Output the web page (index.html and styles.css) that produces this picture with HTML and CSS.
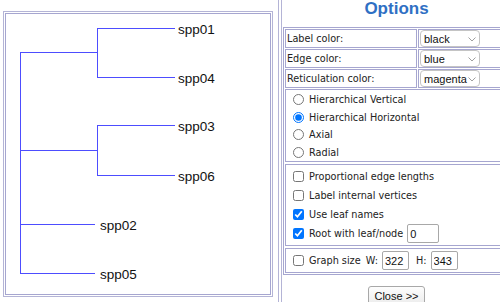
FILE: index.html
```html
<!DOCTYPE html>
<html lang="en">
<head>
    <meta charset="UTF-8">
    <meta name="viewport" content="width=device-width, initial-scale=1.0">
    <title>Tree viewer</title>
    <link rel="stylesheet" href="styles.css">
</head>
<body>
    <div class="page">
        <div class="tree-cell">
            <div class="tree-frame">
                <div class="tree-box">
                    <svg class="tree" width="264" height="280" viewBox="6 14 264 280">
                        <g class="edges">
                            <line x1="20.5" y1="52" x2="20.5" y2="274"/>
                            <line x1="20" y1="52.5" x2="97" y2="52.5"/>
                            <line x1="97.5" y1="28" x2="97.5" y2="78"/>
                            <line x1="97" y1="28.5" x2="175" y2="28.5"/>
                            <line x1="97" y1="77.5" x2="175" y2="77.5"/>
                            <line x1="20" y1="150.5" x2="97" y2="150.5"/>
                            <line x1="97.5" y1="125" x2="97.5" y2="176"/>
                            <line x1="97" y1="125.5" x2="175" y2="125.5"/>
                            <line x1="97" y1="175.5" x2="175" y2="175.5"/>
                            <line x1="20" y1="224.5" x2="95" y2="224.5"/>
                            <line x1="20" y1="273.5" x2="95" y2="273.5"/>
                        </g>
                        <g class="leaves">
                            <text x="178" y="34">spp01</text>
                            <text x="178" y="83">spp04</text>
                            <text x="178" y="131">spp03</text>
                            <text x="178" y="181">spp06</text>
                            <text x="100" y="230">spp02</text>
                            <text x="100" y="279">spp05</text>
                        </g>
                    </svg>
                </div>
            </div>
        </div>

        <div class="options-cell">
            <div class="options-inner">
                <h1 class="options-title">Options</h1>
                <div class="options-table">
                    <div class="opt-pair">
                        <div class="opt-label">Label color:</div>
                        <div class="opt-value">
                            <div class="select-wrap">
                                <select><option>black</option><option>blue</option><option>red</option></select>
                                <svg class="chevron" width="8" height="5" viewBox="0 0 8 5"><path d="M0.5 0.5 L4 4 L7.5 0.5"/></svg>
                            </div>
                        </div>
                    </div>
                    <div class="opt-pair">
                        <div class="opt-label">Edge color:</div>
                        <div class="opt-value">
                            <div class="select-wrap">
                                <select><option>blue</option><option>black</option><option>red</option></select>
                                <svg class="chevron" width="8" height="5" viewBox="0 0 8 5"><path d="M0.5 0.5 L4 4 L7.5 0.5"/></svg>
                            </div>
                        </div>
                    </div>
                    <div class="opt-pair">
                        <div class="opt-label">Reticulation color:</div>
                        <div class="opt-value">
                            <div class="select-wrap">
                                <select><option>magenta</option><option>black</option><option>blue</option></select>
                                <svg class="chevron" width="8" height="5" viewBox="0 0 8 5"><path d="M0.5 0.5 L4 4 L7.5 0.5"/></svg>
                            </div>
                        </div>
                    </div>

                    <div class="opt-group radios">
                        <label class="opt-row"><input type="radio" name="layout"> Hierarchical Vertical</label>
                        <label class="opt-row"><input type="radio" name="layout" checked> Hierarchical Horizontal</label>
                        <label class="opt-row"><input type="radio" name="layout"> Axial</label>
                        <label class="opt-row"><input type="radio" name="layout"> Radial</label>
                    </div>

                    <div class="opt-group checks">
                        <label class="opt-row"><input type="checkbox"> Proportional edge lengths</label>
                        <label class="opt-row"><input type="checkbox"> Label internal vertices</label>
                        <label class="opt-row"><input type="checkbox" checked> Use leaf names</label>
                        <div class="opt-row"><input type="checkbox" checked> Root with leaf/node<input class="num-input root-input" type="text" value="0"></div>
                    </div>

                    <div class="opt-group size">
                        <div class="opt-row"><input type="checkbox"> Graph size<span class="dim-label">W:</span><input class="num-input" type="text" value="322"><span class="dim-label dim-h">H:</span><input class="num-input" type="text" value="343"></div>
                    </div>
                </div>
                <div class="close-row">
                    <button class="close-btn">Close &gt;&gt;</button>
                </div>
            </div>
        </div>
    </div>
</body>
</html>
```

FILE: styles.css
```css
body {
    margin: 0;
    background: #fff;
    font-family: 'DejaVu Sans', Verdana, sans-serif;
}
.page {
    display: flex;
    width: 500px;
    height: 302px;
    overflow: hidden;
}
.tree-cell {
    flex: 0 0 275px;
    padding: 11px 0 0 3px;
}
.tree-frame {
    box-sizing: border-box;
    width: 270px;
    height: 286px;
    border: 1px solid #b4b4d6;
    padding: 1px;
}
.tree-box {
    box-sizing: border-box;
    height: 100%;
    border: 1px solid #a6a6d0;
}
.tree {
    display: block;
}
.edges line {
    stroke: #4d4dff;
    stroke-width: 1;
}
.leaves text {
    font-family: 'Liberation Sans', Arial, sans-serif;
    font-size: 13.5px;
    fill: #111;
}
.options-cell {
    flex: 0 0 auto;
    border-left: 1px solid #b4b4d6;
    padding-left: 2px;
}
.options-inner {
    width: 229px;
    height: 100%;
    border-left: 1px solid #b4b4d6;
}
.options-title {
    margin: 0 0 10px;
    font-family: 'Liberation Sans', Arial, sans-serif;
    font-size: 17px;
    line-height: 17px;
    font-weight: bold;
    color: #2f70c4;
    text-align: center;
}
.options-table {
    box-sizing: border-box;
    width: 228px;
    margin-left: 1px;
    border: 1px solid #a6a6d0;
    padding: 1px;
    display: flex;
    flex-direction: column;
    gap: 1px;
    font-size: 9.7px;
    color: #222;
}
.opt-pair {
    display: flex;
    gap: 1px;
    height: 19px;
}
.opt-label,
.opt-value {
    box-sizing: border-box;
    border: 1px solid #a6a6d0;
    padding: 0 1px;
    display: flex;
    align-items: center;
}
.opt-label {
    width: 132px;
}
.opt-value {
    flex: 1;
}
.select-wrap {
    position: relative;
    width: 60px;
    height: 17px;
}
.select-wrap select {
    appearance: none;
    box-sizing: border-box;
    width: 100%;
    height: 100%;
    margin: 0;
    padding: 0 0 0 3px;
    border: 1px solid #c4c4c4;
    border-radius: 4px;
    background: #fff;
    font-family: 'Liberation Sans', Arial, sans-serif;
    font-size: 11px;
    color: #111;
}
.chevron {
    position: absolute;
    right: 4px;
    top: 7px;
    pointer-events: none;
}
.chevron path {
    fill: none;
    stroke: #a0a0a0;
    stroke-width: 1;
}
.opt-group {
    box-sizing: border-box;
    border: 1px solid #a6a6d0;
    display: flex;
    flex-direction: column;
}
.radios {
    height: 73px;
    padding-top: 1px;
}
.radios .opt-row {
    height: 17.5px;
}
.checks {
    margin-top: 1px;
    height: 82px;
    padding-top: 2px;
}
.checks .opt-row {
    height: 19px;
}
.size {
    margin-top: 1px;
    height: 25px;
    justify-content: center;
}
.opt-row {
    display: flex;
    align-items: center;
    white-space: pre;
}
.opt-row input[type="radio"],
.opt-row input[type="checkbox"] {
    width: 11px;
    height: 11px;
    margin: 0 2px 0 7px;
}
.num-input {
    box-sizing: border-box;
    width: 27px;
    height: 19px;
    margin: 0 0 0 4px;
    padding: 0 2px;
    border: 1px solid #a8a8a8;
    border-radius: 2px;
    font-family: 'Liberation Sans', Arial, sans-serif;
    font-size: 11px;
    color: #111;
}
.root-input {
    width: 32px;
}
.dim-label {
    margin-left: 5px;
}
.dim-h {
    margin-left: 7px;
}
.close-row {
    margin-top: 10px;
    text-align: center;
}
.close-btn {
    height: 20px;
    padding: 0 5px;
    border: 1px solid #a8a8a8;
    border-radius: 3px;
    background: linear-gradient(#fdfdfd, #ebebeb);
    font-family: 'Liberation Sans', Arial, sans-serif;
    font-size: 11px;
    color: #111;
}
```
